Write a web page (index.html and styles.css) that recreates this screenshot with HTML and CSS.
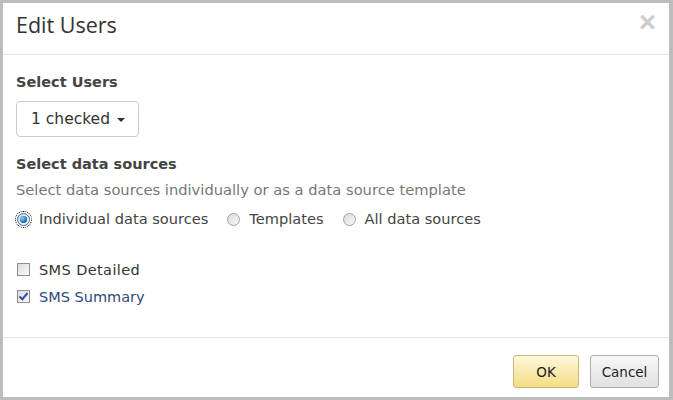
FILE: index.html
```html
<!DOCTYPE html>
<html lang="en">
<head>
  <meta charset="UTF-8" />
  <meta name="viewport" content="width=device-width, initial-scale=1.0" />
  <title>Edit Users</title>
  <link rel="stylesheet" href="styles.css">
</head>

<body>
  <div class="modal">
    <div class="modal-header">
      <h2 class="modal-title">Edit Users</h2>
      <span class="close">&times;</span>
    </div>

    <div class="modal-body">
      <h4 class="section-title">Select Users</h4>
      <button class="dropdown-btn">1 checked <span class="caret"></span></button>

      <h4 class="section-title sources">Select data sources</h4>
      <p class="help">Select data sources individually or as a data source template</p>

      <div class="radios">
        <label class="radio"><span class="radio-box checked"></span>Individual data sources</label>
        <label class="radio"><span class="radio-box"></span>Templates</label>
        <label class="radio"><span class="radio-box"></span>All data sources</label>
      </div>

      <ul class="source-list">
        <li><span class="check-box"></span><span class="spaced">SMS Detailed</span></li>
        <li class="selected"><span class="check-box checked"></span>SMS Summary</li>
      </ul>
    </div>

    <div class="modal-footer">
      <button class="btn btn-ok">OK</button>
      <button class="btn btn-cancel">Cancel</button>
    </div>
  </div>
</body>
</html>
```

FILE: styles.css
```css
body {
  margin: 0;
  background: #bdbdbd;
  font-family: "DejaVu Sans", Verdana, sans-serif;
  color: #333;
}
.modal {
  margin: 3px 4px 3px 3px;
  height: 394px;
  background: #fff;
  display: flex;
  flex-direction: column;
}
.modal-header {
  height: 51px;
  border-bottom: 1px solid #e5e5e5;
  display: flex;
  justify-content: space-between;
  align-items: flex-start;
  padding: 0 13px;
}
.modal-title {
  margin: 7px 0 0 0;
  font-family: "Open Sans", sans-serif;
  font-weight: normal;
  font-size: 21.5px;
  color: #333;
}
.close {
  font-family: "Liberation Sans", Arial, sans-serif;
  font-size: 29px;
  line-height: 30px;
  font-weight: bold;
  color: #cccccc;
  margin-top: 4px;
  margin-right: 0;
}
.modal-body {
  flex: 1;
  padding: 17px 13px 0 13px;
  border-bottom: 1px solid #e5e5e5;
}
.section-title {
  margin: 0 0 9px 0;
  font-size: 14.5px;
  line-height: 20px;
  font-weight: bold;
  color: #444;
}
.sources {
  margin-top: 17px;
  margin-bottom: 6px;
}
.dropdown-btn {
  font-family: "DejaVu Sans", Verdana, sans-serif;
  font-size: 15.5px;
  color: #333;
  background: #fff;
  border: 1px solid #ccc;
  border-radius: 4px;
  height: 36px;
  padding: 0 13px 0 14px;
}
.caret {
  display: inline-block;
  width: 0;
  height: 0;
  margin-left: 2px;
  vertical-align: middle;
  border-top: 4px solid #333;
  border-left: 4px solid transparent;
  border-right: 4px solid transparent;
}
.help {
  margin: 0 0 9px 0;
  font-size: 14.7px;
  line-height: 20px;
  color: #777;
}
.radios {
  display: flex;
  gap: 18px;
  font-size: 14.6px;
  line-height: 20px;
  color: #444;
}
.radio {
  display: flex;
  align-items: center;
}
.radio-box {
  width: 11px;
  height: 11px;
  border: 1px solid #a0a0a0;
  border-radius: 50%;
  background: linear-gradient(135deg, #d8d8d8, #fafafa);
  margin: 0 9px 0 1px;
  position: relative;
}
.radio-box.checked {
  outline: 1px dotted #000;
  outline-offset: 1px;
  border-color: #3a6ea5;
}
.radio-box.checked::after {
  content: "";
  position: absolute;
  left: 2px;
  top: 2px;
  width: 7px;
  height: 7px;
  border-radius: 50%;
  background: radial-gradient(circle at 35% 35%, #8fd3ff, #1a6fb8 60%, #0b3d75);
}
.source-list {
  list-style-type: none;
  padding: 0;
  margin: 27px 0 0 0;
  font-size: 14.5px;
  color: #333;
}
.source-list li {
  display: flex;
  align-items: center;
  height: 27px;
}
.source-list li.selected {
  color: #2d4a7a;
}
.spaced {
  letter-spacing: 0.4px;
}
.check-box {
  width: 11px;
  height: 11px;
  border: 1px solid #8f8f8f;
  background: linear-gradient(135deg, #dcdcdc, #fafafa);
  margin: 0 9px 0 1px;
  position: relative;
}
.check-box.checked::after {
  content: "";
  position: absolute;
  left: 3px;
  top: 0px;
  width: 3px;
  height: 7px;
  border-right: 2px solid #2b4fb0;
  border-bottom: 2px solid #2b4fb0;
  transform: rotate(40deg);
}
.modal-footer {
  flex: 0 0 59px;
  display: flex;
  justify-content: flex-end;
  align-items: flex-start;
  gap: 11px;
  padding: 17px 10px 0 0;
  box-sizing: border-box;
}
.btn {
  font-family: "DejaVu Sans", Verdana, sans-serif;
  font-size: 13.5px;
  color: #222;
  height: 33px;
  border-radius: 3px;
  cursor: pointer;
}
.btn-ok {
  width: 66px;
  border: 1px solid #c9b87a;
  background: linear-gradient(#fdf8dc, #f5dc85);
}
.btn-cancel {
  width: 69px;
  border: 1px solid #adadad;
  background: linear-gradient(#f7f7f7, #e1e1e1);
}
```
